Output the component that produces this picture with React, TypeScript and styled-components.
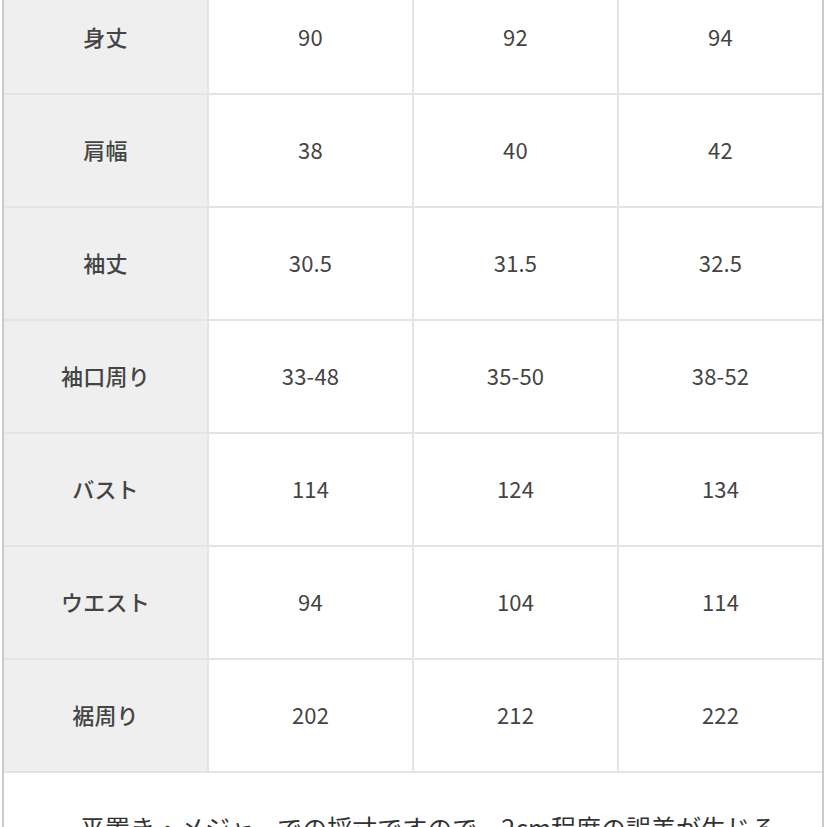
import styled, { createGlobalStyle } from "styled-components";

const GlobalStyle = createGlobalStyle`
  html, body {
    margin: 0;
    padding: 0;
    background: #ffffff;
    overflow: hidden;
  }
  body {
    font-family: "Noto Sans CJK JP", "Noto Sans", sans-serif;
    color: #3f3f3f;
  }
`;

const Page = styled.div`
  width: 827px;
  height: 827px;
  overflow: hidden;
  background: #ffffff;
`;

const Frame = styled.div`
  margin-left: 2px;
  margin-top: -18px;
  width: 818px;
  border-left: 2px solid #c9c9c9;
  border-right: 2px solid #c9c9c9;
`;

const SizeTable = styled.div`
  display: grid;
  grid-template-columns: repeat(4, 1fr);
  grid-auto-rows: 111px;
  gap: 2px;
  padding-bottom: 2px;
  background: #e4e4e4;
`;

interface CellProps {
  $head?: boolean;
}

const Cell = styled.div<CellProps>`
  display: flex;
  align-items: center;
  justify-content: center;
  padding-bottom: 4px;
  background: ${({ $head }) => ($head ? "#efefef" : "#ffffff")};
  font-size: 22px;
  font-weight: ${({ $head }) => ($head ? 500 : 400)};
  color: #444444;
  letter-spacing: 0.2px;
`;

const Note = styled.div`
  padding: 36px 40px 40px 76px;
  font-size: 25px;
  line-height: 1.5;
  color: #333333;
  background: #ffffff;
`;

const rows = [
  { label: "身丈", values: ["90", "92", "94"] },
  { label: "肩幅", values: ["38", "40", "42"] },
  { label: "袖丈", values: ["30.5", "31.5", "32.5"] },
  { label: "袖口周り", values: ["33-48", "35-50", "38-52"] },
  { label: "バスト", values: ["114", "124", "134"] },
  { label: "ウエスト", values: ["94", "104", "114"] },
  { label: "裾周り", values: ["202", "212", "222"] },
];

export default function App() {
  return (
    <Page>
      <GlobalStyle />
      <Frame>
        <SizeTable>
          {rows.map((row) => (
            <>
              <Cell $head key={row.label}>
                {row.label}
              </Cell>
              {row.values.map((v, i) => (
                <Cell key={row.label + i}>{v}</Cell>
              ))}
            </>
          ))}
        </SizeTable>
        <Note>
          平置き・メジャーでの採寸ですので、2cm程度の誤差が生じる場合がございます。
        </Note>
      </Frame>
    </Page>
  );
}
